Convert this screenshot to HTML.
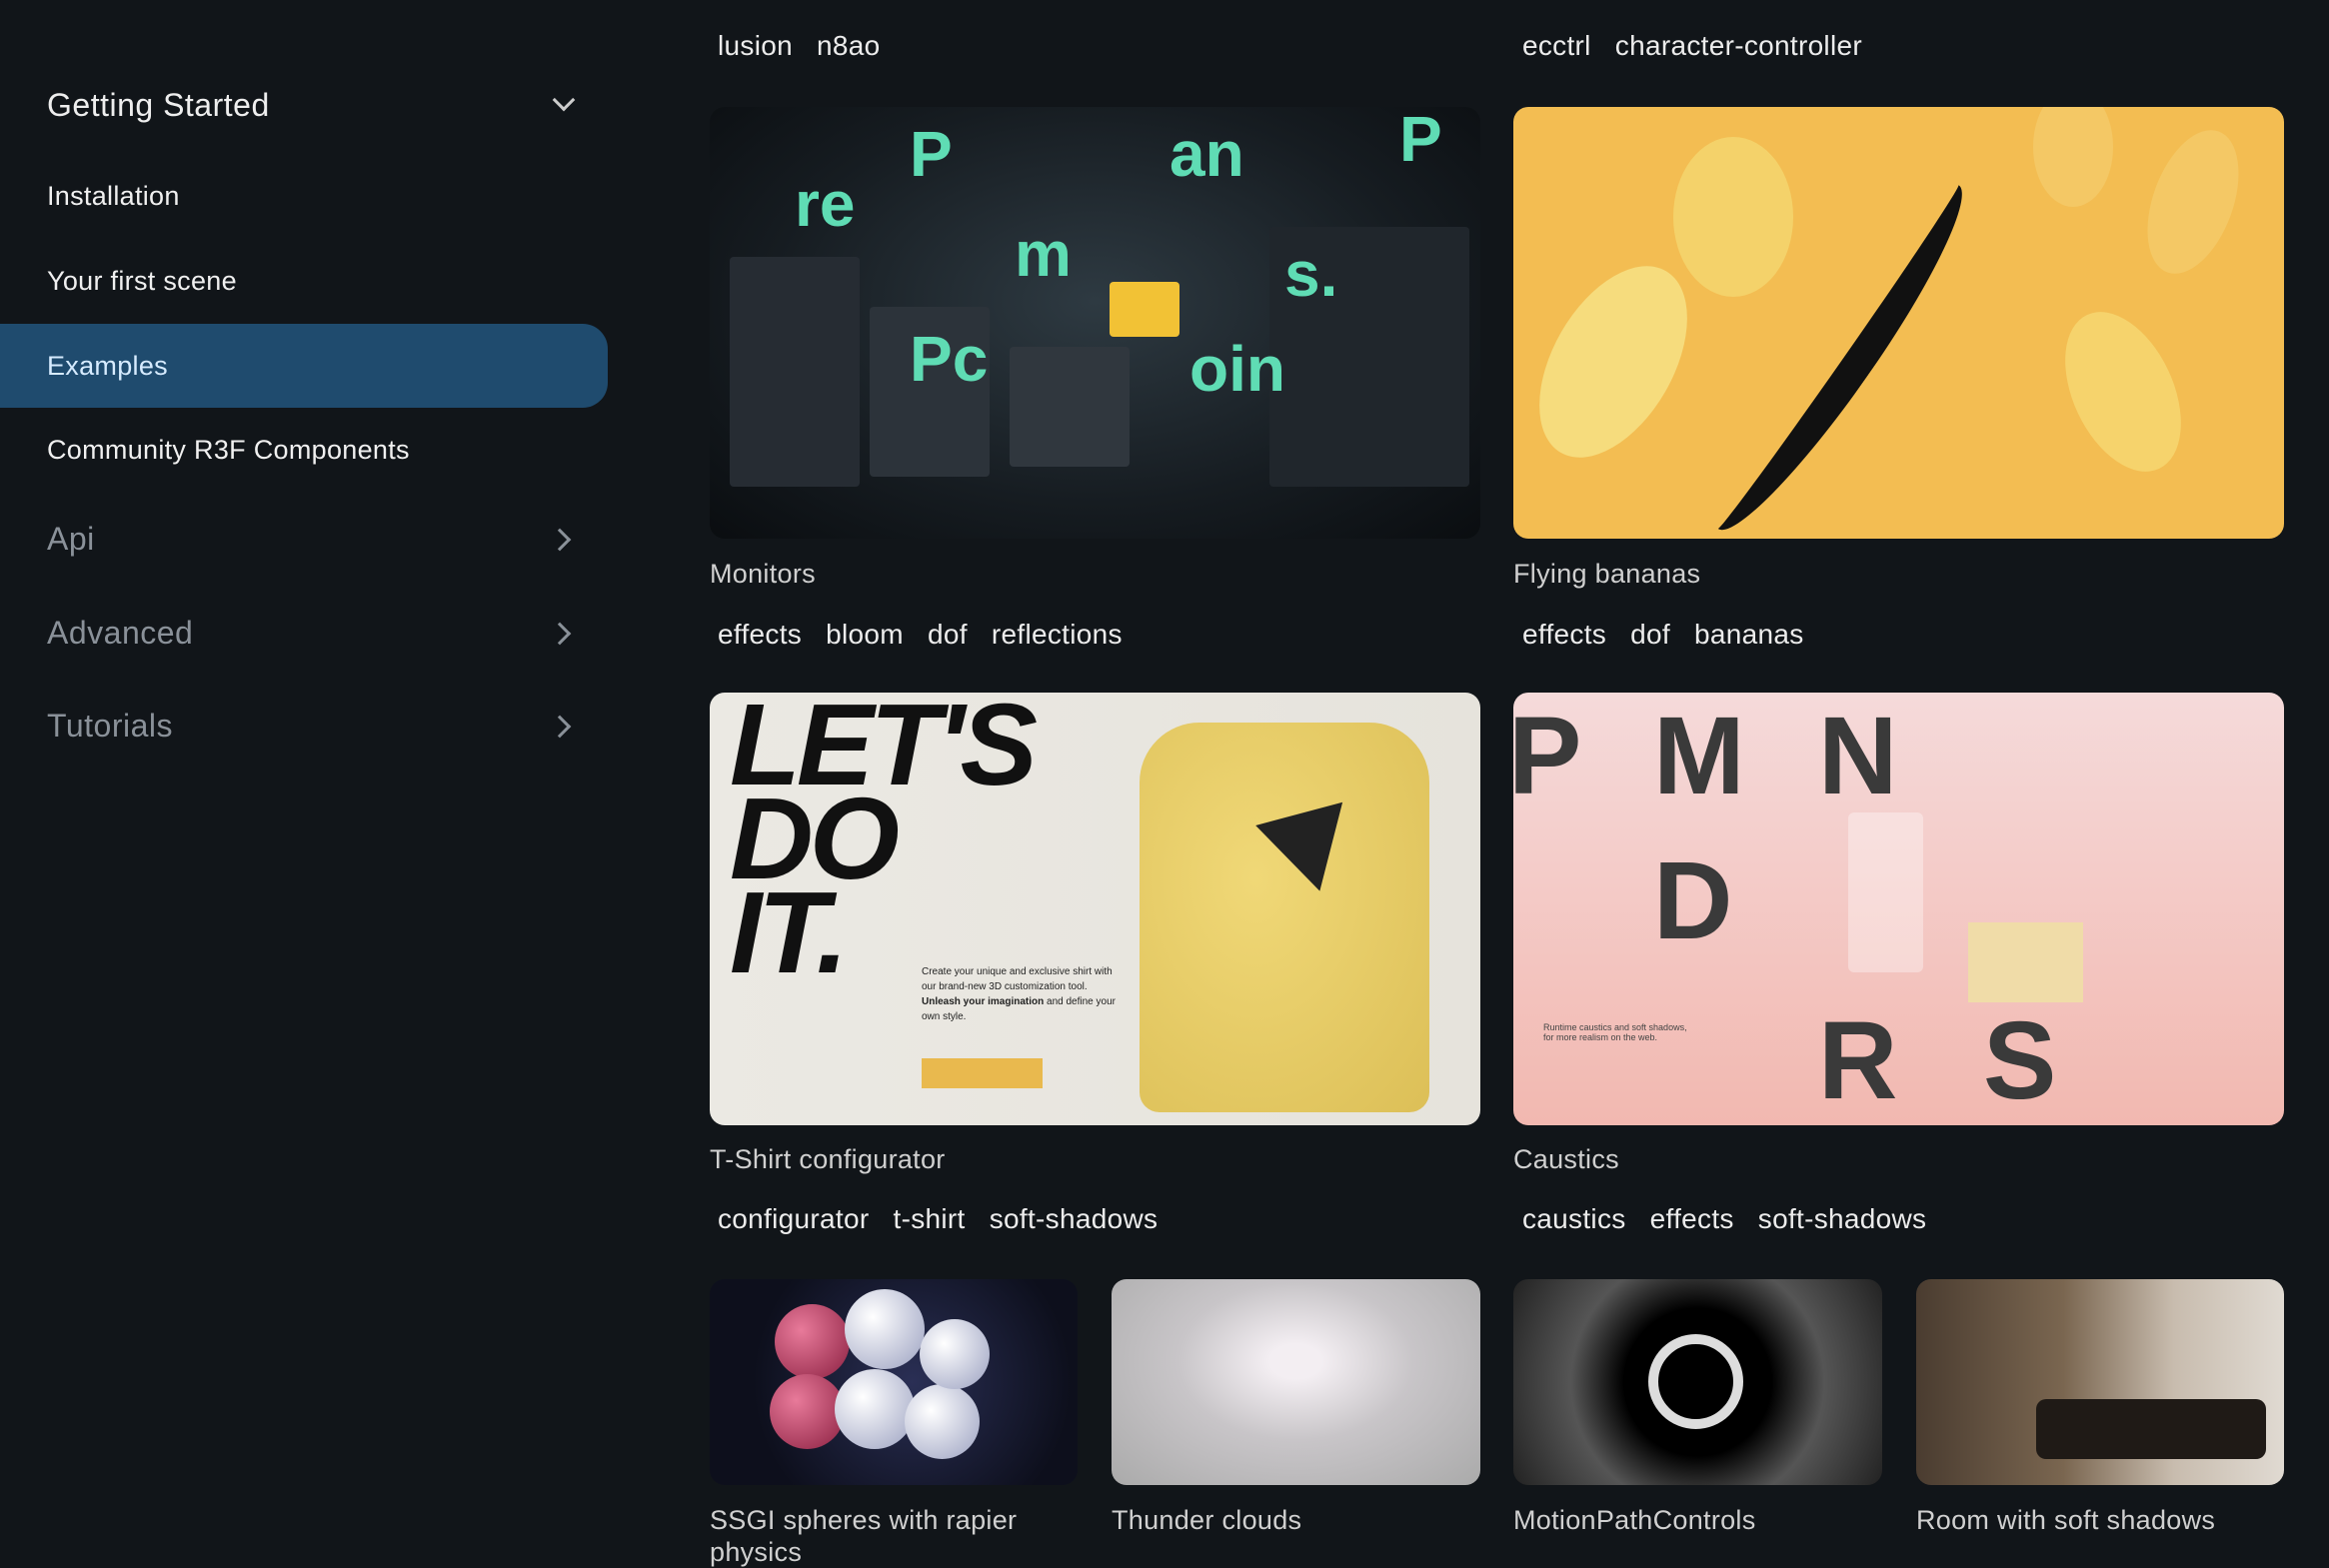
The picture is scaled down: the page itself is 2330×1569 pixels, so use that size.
<!DOCTYPE html>
<html><head><meta charset="utf-8"><style>
*{margin:0;padding:0;box-sizing:border-box}
body{width:2330px;height:1562px;background:#111519;font-family:"Liberation Sans",sans-serif;overflow:hidden;position:relative;color:#e8e8e8}
.a{position:absolute;white-space:nowrap}
.nav{font-size:27px;color:#f0f0f0;left:47px;letter-spacing:0.3px}
.sec{font-size:32px;left:47px;letter-spacing:0.5px}
.chev{position:absolute;left:556px;width:16px;height:16px;border-right:3px solid #ccc;border-bottom:3px solid #ccc}
.card{position:absolute;border-radius:15px;overflow:hidden}
.t{font-size:27px;color:#d0d0d0;letter-spacing:0.3px}
.tg{font-size:28px;color:#ececec;word-spacing:16px;letter-spacing:0.3px}
.m{position:absolute;font:bold 64px 'Liberation Sans';color:#5fdcb4}
.bx{position:absolute;background:#262c33;border-radius:4px}
</style></head><body>
<div class="a sec" style="top:87px;color:#eee">Getting Started</div>
<div class="chev" style="top:92px;transform:rotate(45deg)"></div>
<div class="a nav" style="top:181px">Installation</div>
<div class="a nav" style="top:266px">Your first scene</div>
<div style="position:absolute;left:0;top:324px;width:608px;height:84px;background:#1f4b6e;border-radius:0 25px 25px 0"></div>
<div class="a nav" style="top:351px;color:#d6ebff">Examples</div>
<div class="a nav" style="top:435px">Community R3F Components</div>
<div class="a sec" style="top:521px;color:#8a9199">Api</div>
<div class="chev" style="top:532px;left:552px;transform:rotate(-45deg);border-color:#8a9199"></div>
<div class="a sec" style="top:615px;color:#8a9199">Advanced</div>
<div class="chev" style="top:626px;left:552px;transform:rotate(-45deg);border-color:#8a9199"></div>
<div class="a sec" style="top:708px;color:#8a9199">Tutorials</div>
<div class="chev" style="top:719px;left:552px;transform:rotate(-45deg);border-color:#8a9199"></div>

<div class="a tg" style="left:718px;top:30px">lusion n8ao</div>
<div class="a tg" style="left:1523px;top:30px">ecctrl character-controller</div>

<div class="card" style="left:710px;top:107px;width:771px;height:432px;background:radial-gradient(ellipse at 50% 45%,#2e3a42,#161c21 60%,#0a0d10)">
<div class="bx" style="left:20px;top:150px;width:130px;height:230px"></div>
<div class="bx" style="left:160px;top:200px;width:120px;height:170px;background:#2c333a"></div>
<div class="bx" style="left:560px;top:120px;width:200px;height:260px;background:#20262c"></div>
<div class="bx" style="left:300px;top:240px;width:120px;height:120px;background:#30373e"></div>
<div class="m" style="left:200px;top:10px">P</div>
<div class="m" style="left:85px;top:60px">re</div>
<div class="m" style="left:460px;top:10px">an</div>
<div class="m" style="left:305px;top:110px">m</div>
<div class="m" style="left:200px;top:215px">Pc</div>
<div class="m" style="left:480px;top:225px">oin</div>
<div class="m" style="left:575px;top:130px">s.</div>
<div class="m" style="left:690px;top:-5px">P</div>
<div class="a" style="left:400px;top:175px;width:70px;height:55px;background:#f2c235;border-radius:4px"></div>
</div>
<div class="card" style="left:1514px;top:107px;width:771px;height:432px;background:#f3bd52">
<div class="a" style="left:40px;top:150px;width:120px;height:210px;background:#f6dc7d;border-radius:50%;transform:rotate(30deg)"></div>
<div class="a" style="left:160px;top:30px;width:120px;height:160px;background:#f4d26a;border-radius:50%"></div>
<div class="a" style="left:290px;top:40px;width:70px;height:420px;border-right:30px solid #111;border-radius:50%;transform:rotate(35deg)"></div>
<div class="a" style="left:560px;top:200px;width:100px;height:170px;background:#f6d36c;border-radius:50%;transform:rotate(-25deg)"></div>
<div class="a" style="left:520px;top:-20px;width:80px;height:120px;background:#f4c865;border-radius:50%"></div>
<div class="a" style="left:640px;top:20px;width:80px;height:150px;background:#f4c865;border-radius:50%;transform:rotate(20deg)"></div>
</div>
<div class="a t" style="left:710px;top:559px">Monitors</div>
<div class="a t" style="left:1514px;top:559px">Flying bananas</div>
<div class="a tg" style="left:718px;top:619px">effects bloom dof reflections</div>
<div class="a tg" style="left:1523px;top:619px">effects dof bananas</div>

<div class="card" style="left:710px;top:693px;width:771px;height:433px;background:linear-gradient(90deg,#ebe9e3,#e6e3dc)">
<div class="a" style="left:20px;top:5px;font:italic 900 116px/94px 'Liberation Sans';color:#111;letter-spacing:-4px">LET'S<br>DO<br>IT.</div>
<div class="a" style="left:212px;top:272px;font:10px/15px 'Liberation Sans';color:#222">Create your unique and exclusive shirt with<br>our brand-new 3D customization tool.<br><b>Unleash your imagination</b> and define your<br>own style.</div>
<div class="a" style="left:212px;top:366px;width:121px;height:30px;background:#e9b94e"></div>
<div class="a" style="left:430px;top:30px;width:290px;height:390px;background:radial-gradient(ellipse at 40% 40%,#f0d877,#dcbf57);border-radius:60px 60px 20px 20px"></div>
<div class="a" style="left:555px;top:120px;width:0;height:0;border-left:45px solid transparent;border-right:45px solid transparent;border-top:80px solid #222;transform:rotate(-15deg)"></div>
</div>
<div class="card" style="left:1514px;top:693px;width:771px;height:433px;background:linear-gradient(#f5dada,#f2b8b0)">
<div class="a" style="left:-5px;top:0;font:bold 110px 'Liberation Sans';color:#3a3a3a">P</div>
<div class="a" style="left:140px;top:0;font:bold 110px 'Liberation Sans';color:#3a3a3a">M</div>
<div class="a" style="left:305px;top:0;font:bold 110px 'Liberation Sans';color:#3a3a3a">N</div>
<div class="a" style="left:140px;top:145px;font:bold 110px 'Liberation Sans';color:#3a3a3a">D</div>
<div class="a" style="left:305px;top:305px;font:bold 110px 'Liberation Sans';color:#3a3a3a">R</div>
<div class="a" style="left:470px;top:305px;font:bold 110px 'Liberation Sans';color:#3a3a3a">S</div>
<div class="a" style="left:335px;top:120px;width:75px;height:160px;background:rgba(255,255,255,.35);border-radius:6px"></div>
<div class="a" style="left:455px;top:230px;width:115px;height:80px;background:#f0dca8"></div>
<div class="a" style="left:30px;top:330px;font:9px 'Liberation Sans';color:#444">Runtime caustics and soft shadows,<br>for more realism on the web.</div>
</div>
<div class="a t" style="left:710px;top:1145px">T-Shirt configurator</div>
<div class="a t" style="left:1514px;top:1145px">Caustics</div>
<div class="a tg" style="left:718px;top:1204px">configurator t-shirt soft-shadows</div>
<div class="a tg" style="left:1523px;top:1204px">caustics effects soft-shadows</div>

<div class="card" style="left:710px;top:1280px;width:368px;height:206px;background:radial-gradient(circle at 55% 50%,#2a2f55,#0d0f1c 70%)">
<div class="a" style="left:65px;top:25px;width:75px;height:75px;border-radius:50%;background:radial-gradient(circle at 35% 35%,#e87a9a,#8a1f40)"></div>
<div class="a" style="left:135px;top:10px;width:80px;height:80px;border-radius:50%;background:radial-gradient(circle at 35% 35%,#fff,#9aa0c0)"></div>
<div class="a" style="left:60px;top:95px;width:75px;height:75px;border-radius:50%;background:radial-gradient(circle at 35% 35%,#e87a9a,#8a1f40)"></div>
<div class="a" style="left:125px;top:90px;width:80px;height:80px;border-radius:50%;background:radial-gradient(circle at 35% 35%,#fff,#9aa0c0)"></div>
<div class="a" style="left:195px;top:105px;width:75px;height:75px;border-radius:50%;background:radial-gradient(circle at 35% 35%,#fff,#9aa0c0)"></div>
<div class="a" style="left:210px;top:40px;width:70px;height:70px;border-radius:50%;background:radial-gradient(circle at 35% 35%,#fff,#9aa0c0)"></div>
</div>
<div class="card" style="left:1112px;top:1280px;width:369px;height:206px;background:radial-gradient(ellipse at 50% 40%,#f3eef2 10%,#c8c5c8 45%,#aaa 100%)"></div>
<div class="card" style="left:1514px;top:1280px;width:369px;height:206px;background:radial-gradient(circle at 50% 50%,#000 35%,#555 60%,#222)">
<div class="a" style="left:135px;top:55px;width:95px;height:95px;border-radius:50%;border:10px solid #ddd"></div>
</div>
<div class="card" style="left:1917px;top:1280px;width:368px;height:206px;background:linear-gradient(90deg,#4a3c30,#7a6650 40%,#c8bcae 70%,#e0dad2)">
<div class="a" style="left:120px;top:120px;width:230px;height:60px;background:#1f1a16;border-radius:10px"></div>
</div>
<div class="a t" style="left:710px;top:1505px;line-height:32px;white-space:normal;width:368px">SSGI spheres with rapier physics</div>
<div class="a t" style="left:1112px;top:1505px;line-height:32px">Thunder clouds</div>
<div class="a t" style="left:1514px;top:1505px;line-height:32px">MotionPathControls</div>
<div class="a t" style="left:1917px;top:1505px;line-height:32px">Room with soft shadows</div>
</body></html>
